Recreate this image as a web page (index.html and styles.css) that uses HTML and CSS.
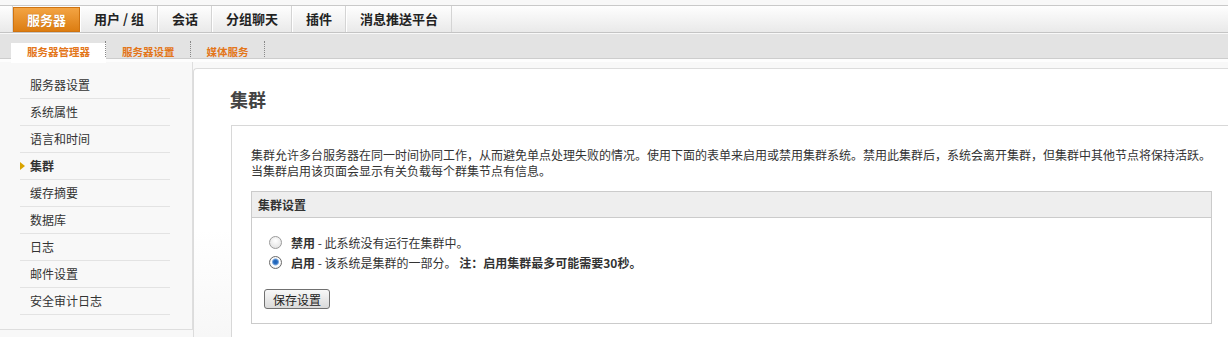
FILE: index.html
```html
<!DOCTYPE html>
<html lang="zh-CN">
<head>
<meta charset="utf-8">
<title>集群</title>
<link rel="stylesheet" href="styles.css">
</head>
<body>
<div class="topnav">
  <ul class="tabs">
    <li class="tab active">服务器</li>
    <li class="tab">用户 / 组</li>
    <li class="tab">会话</li>
    <li class="tab">分组聊天</li>
    <li class="tab">插件</li>
    <li class="tab">消息推送平台</li>
  </ul>
</div>
<div class="subnav">
  <ul class="subtabs">
    <li class="subtab current">服务器管理器</li>
    <li class="subtab">服务器设置</li>
    <li class="subtab">媒体服务</li>
  </ul>
</div>
<div class="layout">
  <aside class="sidebar">
    <ul class="menu">
      <li class="item">服务器设置</li>
      <li class="item">系统属性</li>
      <li class="item">语言和时间</li>
      <li class="item selected">集群</li>
      <li class="item">缓存摘要</li>
      <li class="item">数据库</li>
      <li class="item">日志</li>
      <li class="item">邮件设置</li>
      <li class="item">安全审计日志</li>
    </ul>
  </aside>
  <main class="panel">
    <h1 class="title">集群</h1>
    <div class="outer">
      <p class="desc">集群允许多台服务器在同一时间协同工作，从而避免单点处理失败的情况。使用下面的表单来启用或禁用集群系统。禁用此集群后，系统会离开集群，但集群中其他节点将保持活跃。<br>当集群启用该页面会显示有关负载每个群集节点有信息。</p>
      <div class="settings">
        <div class="settings-head">集群设置</div>
        <div class="settings-body">
          <label class="opt"><input class="radio" type="radio" name="c"><span><b>禁用</b> - 此系统没有运行在集群中。</span></label>
          <label class="opt"><input class="radio" type="radio" name="c" checked><span><b>启用</b> - 该系统是集群的一部分。 <b>注：启用集群最多可能需要30秒。</b></span></label>
          <button class="btn" type="button">保存设置</button>
        </div>
      </div>
    </div>
  </main>
</div>
</body>
</html>
```
FILE: styles.css
```css
* { box-sizing: border-box; }
html, body { margin: 0; padding: 0; }
body {
  background: #f8f8f8;
  font-family: "Noto Sans CJK SC", "Noto Sans", sans-serif;
  font-size: 12px;
  color: #333;
  overflow: hidden;
  height: 337px;
}
ul { list-style: none; margin: 0; padding: 0; }

/* top nav */
.topnav {
  margin-top: 5px;
  border-top: 1px solid #c9c9c9;
  border-bottom: 1px solid #c4c4c4;
  background: linear-gradient(#fefefe, #e9e9e9);
  height: 28px;
  padding-left: 12px;
}
.tabs { display: flex; height: 100%; border-left: 1px solid #d4d4d4; }
.tab {
  height: 26px;
  line-height: 25px;
  padding: 0 13px;
  font-size: 13px;
  font-weight: bold;
  color: #222;
  border-right: 1px solid #d4d4d4;
  border-left: 1px solid #fff;
}
.tab.active {
  margin-top: 1px;
  height: 25px;
  line-height: 24px;
  background: linear-gradient(#f3a443, #dc7d12);
  color: #fff;
  border: 1px solid #cf7310;
  text-shadow: 0 0 1px #b55e00;
}

/* sub nav */
.subnav {
  margin-top: 1px;
  height: 25px;
  background: #e3e3e3;
  border-bottom: 1px solid #cdcdcd;
  padding-left: 11px;
}
.subtabs { display: flex; height: 100%; }
.subtab {
  position: relative;
  padding: 0 16px;
  height: 25px;
  line-height: 35px;
  font-size: 10.5px;
  font-weight: bold;
  color: #e3761a;
}
.subtab::after {
  content: "";
  position: absolute;
  right: 0;
  top: 7px;
  height: 16px;
  border-right: 1px dotted #888;
}
.subtab.current {
  background: #fff;
  margin-top: 9px;
  height: 20px;
  line-height: 17px;
  padding: 0 16px;
}
.subtab.current::after { top: -2px; }

/* body */
.layout {
  display: flex;
  align-items: flex-start;
  border-top: 3px solid #fdfdfd;
}
.sidebar {
  width: 193px;
  flex: none;
  background: #f8f8f8;
  border-right: 1px solid #dedede;
  border-bottom: 1px solid #dedede;
  padding: 10px 0 14px 20px;
  height: 268px;
}
.menu { width: 150px; }
.item {
  position: relative;
  height: 27px;
  line-height: 26px;
  padding-left: 10px;
  border-bottom: 1px solid #e3e3e3;
  color: #333;
}
.item.selected { font-weight: bold; }
.item.selected::before {
  content: "";
  position: absolute;
  left: 0;
  top: 9px;
  border-left: 5px solid #d9a300;
  border-top: 4px solid transparent;
  border-bottom: 4px solid transparent;
}
.panel {
  flex: 1;
  margin-top: 6px;
  background: linear-gradient(#fff 60%, #f7f7f7);
  border-left: 1px solid #dcdcdc;
  border-top: 1px solid #dcdcdc;
  border-top-left-radius: 4px;
  padding: 17px 0 10px 37px;
  height: 269px;
}
.title {
  margin: 0 0 13px -1px;
  font-size: 18px;
  font-weight: bold;
  color: #444;
  line-height: 26px;
}
.outer {
  border: 1px solid #d8d8d8;
  border-right: 0;
  background: #fff;
  padding: 21px 0 20px 19px;
}
.desc {
  margin: 0 0 12px;
  line-height: 16px;
  white-space: nowrap;
  color: #333;
}
.settings {
  border: 1px solid #cbcbcb;
  margin-right: 16px;
}
.settings-head {
  height: 26px;
  line-height: 25px;
  background: #eeeeee;
  border-bottom: 1px solid #cbcbcb;
  padding-left: 6px;
  font-weight: bold;
  color: #333;
}
.settings-body {
  padding: 14px 12px 14px;
  background: #fff;
}
.opt {
  display: flex;
  align-items: center;
  height: 20px;
  padding-left: 5px;
  color: #333;
}
.opt b { font-weight: bold; }
.radio {
  appearance: none;
  -webkit-appearance: none;
  margin: 0 9px 0 0;
  width: 13px;
  height: 13px;
  border-radius: 50%;
  border: 1px solid #9a9a9a;
  background: radial-gradient(circle at 50% 35%, #fff, #dcdcdc);
  flex: none;
}
.radio:checked {
  background: radial-gradient(circle at 50% 45%, #1a5fb4 0, #2d6fc0 2px, #7aa7dd 3px, #fff 4px, #dcdcdc 100%);
  border-color: #6b6b6b;
}
.btn {
  margin-top: 17px;
  display: block;
  width: 66px;
  height: 20px;
  padding: 0;
  font-family: inherit;
  font-size: 12px;
  color: #222;
  line-height: 17px;
  background: linear-gradient(#f8f8f8, #dadada);
  border: 1px solid #707070;
  border-radius: 3px;
}
```
